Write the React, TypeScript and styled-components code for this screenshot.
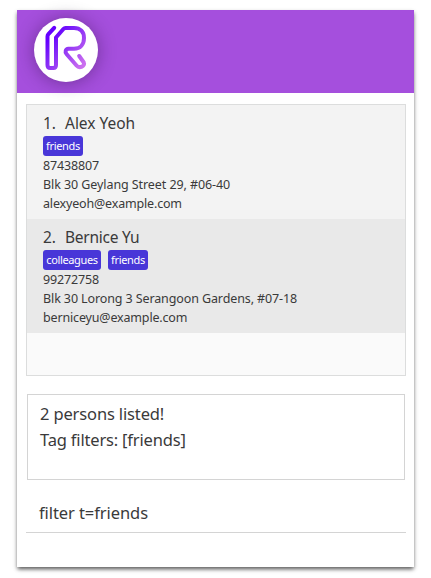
import React from "react";
import styled, { createGlobalStyle } from "styled-components";

const GlobalStyle = createGlobalStyle`
  * { box-sizing: border-box; }
  body {
    margin: 0;
    background: #fff;
    color: #3a3a3a;
    font-family: "Noto Sans", "Open Sans", sans-serif;
  }
`;

const Desktop = styled.div`
  width: 431px;
  height: 578px;
  padding: 10px 17px 11px;
  overflow: hidden;
`;

const Window = styled.main`
  width: 397px;
  height: 557px;
  background: #fff;
  display: flex;
  flex-direction: column;
  box-shadow: 0 3px 4px -1px rgba(0, 0, 0, 0.5), 0 2px 4px rgba(0, 0, 0, 0.28);
`;

const Header = styled.header`
  height: 83px;
  flex: none;
  padding: 8px 17px;
  background: #a54fdd;
`;

const Logo = styled.svg`
  display: block;
  width: 64px;
  height: 64px;
  border-radius: 50%;
  background: #fff;
  box-shadow: 0 1px 18px rgba(40, 10, 60, 0.42);
`;

const PersonList = styled.ul`
  list-style: none;
  height: 272px;
  flex: none;
  margin: 11px 8px 0 9px;
  padding: 0;
  background: #fafafa;
  border: 1px solid #dcdddd;
`;

const PersonCard = styled.li<{ $shaded: boolean }>`
  height: 114px;
  padding: 8px 16px;
  background: ${(p) => (p.$shaded ? "#e9e9e9" : "#f3f3f3")};
`;

const Name = styled.h2<{ $spacing: number }>`
  display: flex;
  margin: 0;
  height: 23px;
  font-size: 15.5px;
  line-height: 21px;
  font-weight: 400;
  letter-spacing: ${(p) => p.$spacing}px;
  white-space: nowrap;
`;

const Index = styled.span`
  width: 22px;
`;

const Tags = styled.div`
  display: flex;
  gap: 7px;
  height: 20px;
`;

const Tag = styled.span<{ $width: number }>`
  width: ${(p) => p.$width}px;
  height: 20px;
  border-radius: 3px;
  background: #4836d8;
  color: #fff;
  font-size: 11px;
  line-height: 20px;
  letter-spacing: -0.35px;
  text-align: center;
`;

const Detail = styled.div<{ $spacing: number }>`
  height: 19px;
  font-size: 12.5px;
  line-height: 19px;
  letter-spacing: ${(p) => p.$spacing}px;
  white-space: nowrap;
`;

const Result = styled.section`
  height: 86px;
  flex: none;
  margin: 18px 9px 0 10px;
  padding: 6px 12px;
  border: 1px solid #d4d4d4;
`;

const ResultLine = styled.div<{ $spacing: number }>`
  height: 26px;
  font-size: 16.5px;
  line-height: 26px;
  letter-spacing: ${(p) => p.$spacing}px;
  white-space: nowrap;
`;

const Command = styled.div`
  height: 53px;
  flex: none;
  margin: 0 8px 0 9px;
  padding: 20px 13px 0;
  border-bottom: 1px solid #d4d4d4;
  font-size: 16.5px;
  line-height: 26px;
  letter-spacing: -0.08px;
`;

const people = [
  {
    name: "Alex Yeoh",
    spacing: -0.02,
    tags: [{ label: "friends", width: 40 }],
    details: [
      { text: "87438807", spacing: -0.15 },
      { text: "Blk 30 Geylang Street 29, #06-40", spacing: -0.08 },
      { text: "alexyeoh@example.com", spacing: -0.17 },
    ],
  },
  {
    name: "Bernice Yu",
    spacing: -0.25,
    tags: [
      { label: "colleagues", width: 58 },
      { label: "friends", width: 40 },
    ],
    details: [
      { text: "99272758", spacing: -0.15 },
      { text: "Blk 30 Lorong 3 Serangoon Gardens, #07-18", spacing: -0.11 },
      { text: "berniceyu@example.com", spacing: -0.16 },
    ],
  },
];

export default function App() {
  return (
    <>
      <GlobalStyle />
      <Desktop>
        <Window>
          <Header>
            <Logo viewBox="0 0 64 64" aria-label="R">
              <defs>
                <linearGradient id="ink" gradientUnits="userSpaceOnUse" x1="16" y1="20" x2="48" y2="48">
                  <stop offset="0" stopColor="#6500ff" />
                  <stop offset="0.25" stopColor="#7c20f8" />
                  <stop offset="1" stopColor="#cb6fef" />
                </linearGradient>
              </defs>
              <path
                d="M20.2 9.8L14.4 16.2Q13.5 17.2 13.5 18.5V47Q13.5 50 16.2 50H19.3Q22 50 22 47V19.5L29.4 11Q30.3 10 31.6 10H40C46.5 10 50 14 50 20S46.5 30.7 40 30.7H34.5C31.5 31 30.8 34 32.5 36L42.5 47.5C45.5 51 51.5 48 49.8 44.5L45.2 38"
                fill="none"
                stroke="url(#ink)"
                strokeWidth="4"
                strokeLinecap="round"
                strokeLinejoin="round"
              />
            </Logo>
          </Header>
          <PersonList>
            {people.map((person, i) => (
              <PersonCard key={person.name} $shaded={i % 2 === 1}>
                <Name $spacing={person.spacing}>
                  <Index>{i + 1}.</Index>
                  {person.name}
                </Name>
                <Tags>
                  {person.tags.map((tag) => (
                    <Tag key={tag.label} $width={tag.width}>
                      {tag.label}
                    </Tag>
                  ))}
                </Tags>
                {person.details.map((d) => (
                  <Detail key={d.text} $spacing={d.spacing}>
                    {d.text}
                  </Detail>
                ))}
              </PersonCard>
            ))}
          </PersonList>
          <Result>
            <ResultLine $spacing={-0.14}>2 persons listed!</ResultLine>
            <ResultLine $spacing={-0.18}>Tag filters: [friends]</ResultLine>
          </Result>
          <Command>filter t=friends</Command>
        </Window>
      </Desktop>
    </>
  );
}
